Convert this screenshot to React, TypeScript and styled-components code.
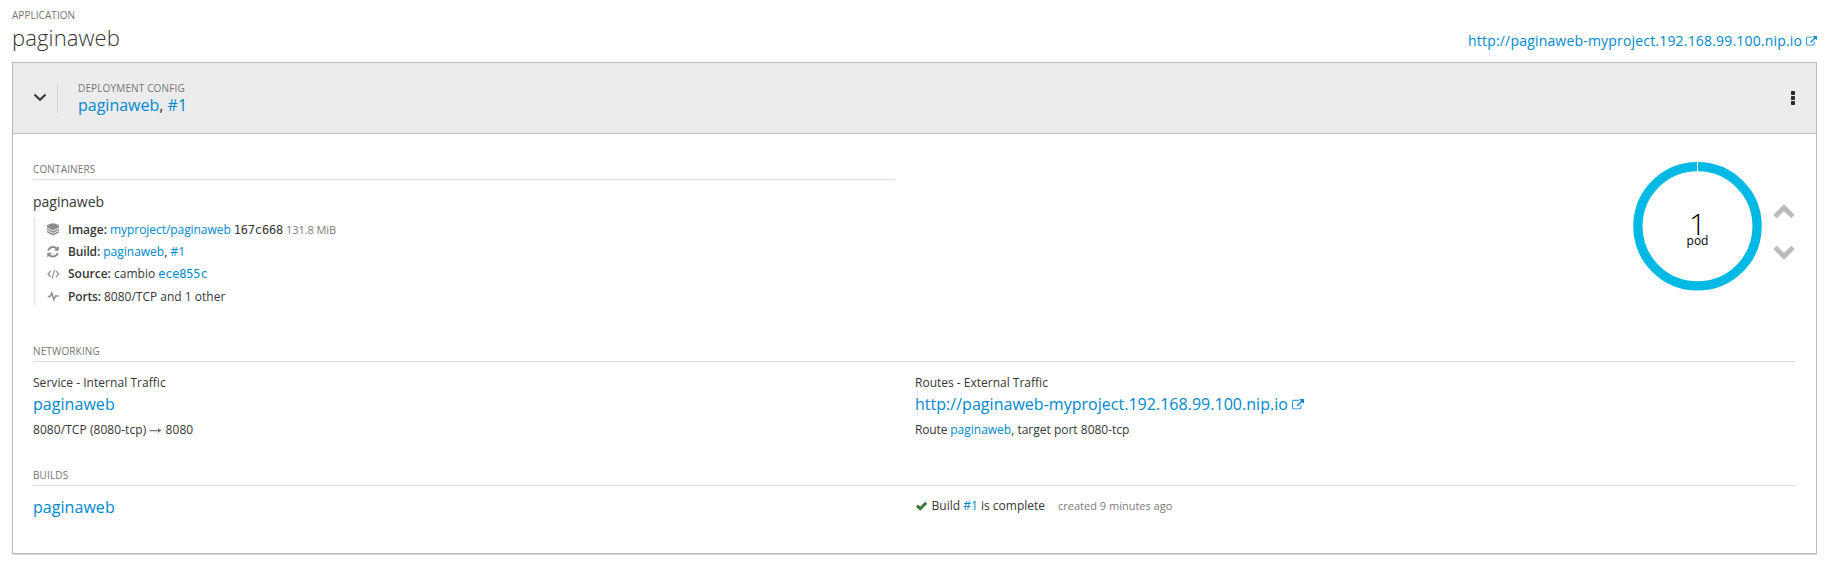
import React from "react";
import styled, { createGlobalStyle } from "styled-components";

const Global = createGlobalStyle`
  * { box-sizing: border-box; }
  body { margin: 0; background: #fff; color: #363636; font: 12px/20px "Open Sans", sans-serif; }
`;

const Page = styled.main`padding: 5px 13px 0 12px; width: 1830px; height: 580px; overflow: hidden;`;
const AppHeader = styled.header`display: flex; justify-content: space-between; align-items: flex-end; height: 57px; padding-bottom: 11px;`;
const Label = styled.div`font-size: 10px; line-height: 20px; letter-spacing: 0.05px; color: #757575; text-transform: uppercase;`;
const Title = styled.h1`margin: 0; height: 26px; font-size: 22px; line-height: 24px; font-weight: 300; letter-spacing: 0.12px;`;
const Text = styled.span<{ $track?: number }>`letter-spacing: ${(p) => p.$track ?? 0}px;`;
const Link = styled.a<{ $size?: number; $track?: number }>`
  color: #0088ce;
  text-decoration: none;
  font-size: ${(p) => (p.$size ? `${p.$size}px` : "inherit")};
  letter-spacing: ${(p) => p.$track ?? 0}px;
`;
const Panel = styled.section`border: 1px solid #bbb; box-shadow: 0 1px 0 #dcdcdc; height: 492px;`;
const PanelHead = styled.div`display: flex; align-items: center; height: 71px; padding: 0 21px 0 20px; background: #ececec; border-bottom: 1px solid #bbb;`;
const Toggle = styled.button`width: 25px; height: 30px; padding: 0; border: 0; border-right: 1px solid #d1d1d1; background: none; display: flex; align-items: center; margin-top: -1px;`;
const HeadText = styled.div`margin: -3px 0 0 20px; flex: 1; font-size: 16px; line-height: 17px;`;
const HeadLabel = styled(Label)`line-height: 17px; letter-spacing: 0.14px;`;
const Body = styled.div`padding: 24px 20px 0;`;
const Top = styled.div`display: flex; justify-content: space-between; height: 182px;`;
const Containers = styled.div`width: 862px;`;
const SectionLabel = styled(Label)`height: 22px; line-height: 22px; letter-spacing: 0.14px; border-bottom: 1px solid #dcdcdc;`;
const ContainerName = styled.h3`margin: 12px 0 5px; font-size: 14px; line-height: 20px; font-weight: 400;`;
const Meta = styled.div`border-left: 3px solid #f0f0f0; height: 89px; padding: 2.7px 0 0 11px;`;
const MetaRow = styled.div`display: flex; height: 22.3px; line-height: 20px; white-space: pre;`;
const IconCell = styled.span`width: 21px; padding-top: 3px; color: #8b8d8f; svg { display: block; }`;
const Hash = styled.span<{ $track?: number }>`font-family: "DejaVu Sans Mono", monospace; font-size: 12px; letter-spacing: ${(p) => p.$track ?? -0.2}px;`;
const Muted = styled.span<{ $track?: number }>`font-size: 11px; color: #7c7c7c; letter-spacing: ${(p) => p.$track ?? 0}px;`;
const Strong = styled.b<{ $track?: number }>`font-weight: 600; letter-spacing: ${(p) => p.$track ?? 0}px;`;
const Scaler = styled.div`display: flex; align-items: flex-start; padding: 3px 1px 0 0;`;
const Arrows = styled.div`display: flex; flex-direction: column; gap: 26px; margin: 43px 0 0 11px;`;
const Row = styled.div`display: grid; grid-template-columns: 882px 1fr;`;
const Networking = styled.div`height: 124px;`;
const NetCell = styled.div`padding-top: 11px; white-space: pre;`;
const Big = styled.div`font-size: 16px; line-height: 22px;`;
const Detail = styled.div`margin-top: 5px; line-height: 20px;`;
const BuildCell = styled.div`padding-top: 10px; white-space: pre;`;
const Age = styled(Muted)`margin-left: 13px;`;
const InlineIcon = styled.svg`display: inline-block; vertical-align: -1px;`;

const External = ({ size }: { size: number }) => (
  <InlineIcon width={size} height={size} viewBox="0 0 1792 1792" fill="currentColor">
    <path d="M1408 928v320q0 119-84.5 203.5t-203.5 84.5h-832q-119 0-203.5-84.5t-84.5-203.5v-832q0-119 84.5-203.5t203.5-84.5h704q14 0 23 9t9 23v64q0 14-9 23t-23 9h-704q-66 0-113 47t-47 113v832q0 66 47 113t113 47h832q66 0 113-47t47-113v-320q0-14 9-23t23-9h64q14 0 23 9t9 23zm384-864v512q0 26-19 45t-45 19-45-19l-176-176-652 652q-10 10-23 10t-23-10l-114-114q-10-10-10-23t10-23l652-652-176-176q-19-19-19-45t19-45 45-19h512q26 0 45 19t19 45z" />
  </InlineIcon>
);
const Layers = () => (
  <svg width="12" height="13" viewBox="0 0 12 13" fill="currentColor">
    <path d="M6 .3Q8.500.5 12 2.200V4.600L6 7.400 0 4.600V2.200Q3.500.5 6 .3z" />
    <path d="M0 5.500l6 2.800 6-2.800v1.600L6 10 0 7.100zM0 8l6 2.800L12 8v1.500L6 12.400 0 9.500z" />
  </svg>
);
const Refresh = () => (
  <svg width="12" height="14" viewBox="100 0 1592 1857" fill="currentColor">
    <path d="M1639 1056q0 5-1 7-64 268-268 434.5t-478 166.5q-146 0-282.5-55t-243.5-157l-129 129q-19 19-45 19t-45-19-19-45v-448q0-26 19-45t45-19h448q26 0 45 19t19 45-19 45l-137 137q71 66 161 102t187 36q134 0 250-65t186-179q11-17 53-117 8-23 30-23h192q13 0 22.500 9.500t9.500 22.500zm25-800v448q0 26-19 45t-45 19h-448q-26 0-45-19t-19-45 19-45l138-138q-148-137-349-137-134 0-250 65t-186 179q-11 17-53 117-8 23-30 23h-199q-13 0-22.500-9.500t-9.500-22.500v-7q65-268 270-434.500t480-166.500q146 0 284 55.500t245 156.500l130-129q19-19 45-19t45 19 19 45z" />
  </svg>
);
const Code = () => (
  <svg width="13" height="14" viewBox="0 0 13 14" fill="none" stroke="currentColor" strokeWidth="1.100">
    <path d="M3.700 4 .9 7l2.800 3M9 4l2.800 3L9 10M7.600 2.800 5.200 11.400" />
  </svg>
);
const Pulse = () => (
  <svg width="12" height="14" viewBox="0 0 12 14" fill="none" stroke="currentColor" strokeWidth="1.500">
    <path d="M.8 6.500h2.300L4.800 2.900 6.800 9.700 8.600 6H11.800" />
  </svg>
);
const Chevron = ({ up }: { up?: boolean }) => (
  <svg width="22" height="15" viewBox="0 0 22 15" fill="none" stroke="#bbb" strokeWidth="5">
    <path d={up ? "M2 12.500 11 3.800l9 8.700" : "M2 2.500 11 11.200l9-8.700"} />
  </svg>
);

export default function App() {
  const url = "http://paginaweb-myproject.192.168.99.100.nip.io";
  return (
    <Page>
      <Global />
      <AppHeader>
        <div>
          <Label>Application</Label>
          <Title>paginaweb</Title>
        </div>
        <Link $size={14} $track={0.185}>{url} <External size={11} /></Link>
      </AppHeader>
      <Panel>
        <PanelHead>
          <Toggle aria-label="Collapse">
            <svg width="14" height="10" viewBox="0 0 14 10" fill="none" stroke="#363636" strokeWidth="2"><path d="m1.500 1.500 5.500 5.300 5.500-5.300" /></svg>
          </Toggle>
          <HeadText>
            <HeadLabel>Deployment Config</HeadLabel>
            <Link>paginaweb</Link>, <Link>#1</Link>
          </HeadText>
          <svg width="4" height="14" viewBox="0 0 4 14" fill="#292929"><rect width="4" height="4" rx=".7" /><rect y="5" width="4" height="4" rx=".7" /><rect y="10" width="4" height="4" rx=".7" /></svg>
        </PanelHead>
        <Body>
          <Top>
            <Containers>
              <SectionLabel>Containers</SectionLabel>
              <ContainerName>paginaweb</ContainerName>
              <Meta>
                <MetaRow><IconCell><Layers /></IconCell><span><Strong>Image:</Strong> <Link $track={-0.06}>myproject/paginaweb</Link> <Hash>167c668</Hash> <Muted $track={-0.1}>131.8 MiB</Muted></span></MetaRow>
                <MetaRow><IconCell><Refresh /></IconCell><span><Strong $track={-0.15}>Build:</Strong> <Link>paginaweb</Link>, <Link>#1</Link></span></MetaRow>
                <MetaRow><IconCell><Code /></IconCell><span><Strong>Source:</Strong> cambio <Link><Hash>ece855c</Hash></Link></span></MetaRow>
                <MetaRow><IconCell><Pulse /></IconCell><span><Strong $track={-0.15}>Ports:</Strong> 8080/TCP and 1 other</span></MetaRow>
              </Meta>
            </Containers>
            <Scaler>
              <svg width="131" height="130" viewBox="0 0 131 130">
                <circle cx="66.500" cy="65.300" r="59.600" fill="none" stroke="#00b9e4" strokeWidth="9.300" />
                <path d="M66.500 0v11" stroke="#fff" />
                <text x="66.500" y="73.700" textAnchor="middle" fontSize="30" fontWeight="300">1</text>
                <text x="66.500" y="84" textAnchor="middle" fontSize="12">pod</text>
              </svg>
              <Arrows><Chevron up /><Chevron /></Arrows>
            </Scaler>
          </Top>
          <Networking>
            <SectionLabel>Networking</SectionLabel>
            <Row>
              <NetCell>
                <Text $track={0.04}>Service - Internal Traffic</Text>
                <Big><Link $track={0.05}>paginaweb</Link></Big>
                <Detail><Text $track={0.06}>8080/TCP (8080-tcp) <InlineIcon width="13" height="9" viewBox="0 0 13 9" fill="#777"><path d="M.5 4h8.500V2l3.500 2.500L9 7V5.200H.5z" /></InlineIcon> 8080</Text></Detail>
              </NetCell>
              <NetCell>
                <Text>Routes - External Traffic</Text>
                <Big><Link $track={0.025}>{url} <External size={12} /></Link></Big>
                <Detail><Text $track={-0.15}>Route </Text><Link>paginaweb</Link>, target port 8080-tcp</Detail>
              </NetCell>
            </Row>
          </Networking>
          <SectionLabel>Builds</SectionLabel>
          <Row>
            <BuildCell><Big><Link $track={0.05}>paginaweb</Link></Big></BuildCell>
            <BuildCell>
              <InlineIcon width="13.500" height="10" viewBox="0 0 13.500 10" fill="none" stroke="#3a743a" strokeWidth="3"><path d="m2 4.500 3.200 3.200L11.200 1.700" /></InlineIcon> Build <Link>#1</Link> is complete<Age>created 9 minutes ago</Age>
            </BuildCell>
          </Row>
        </Body>
      </Panel>
    </Page>
  );
}
